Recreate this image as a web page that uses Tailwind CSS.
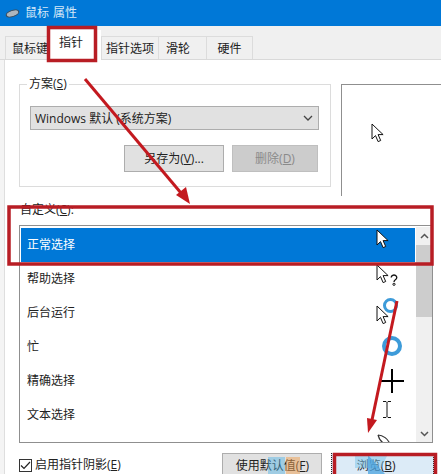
<!DOCTYPE html>
<html lang="zh-CN">
<head>
  <meta charset="UTF-8" />
  <title>鼠标 属性</title>
  <script src="https://cdn.jsdelivr.net/npm/@tailwindcss/browser@4"></script>
</head>
<body class="bg-white">
  <div class="relative w-[441px] h-[474px] overflow-hidden bg-white text-[12px] leading-[16px] text-[#222] font-['Open_Sans','Noto_Sans_CJK_SC',sans-serif]">

    <!-- title bar -->
    <div class="h-[26px] bg-[#0078d7] flex items-center pl-[5px] text-[#d6e9f8]">
      <svg width="15" height="9" viewBox="0 0 15 9"><ellipse cx="7.5" cy="4.5" rx="6.5" ry="3" transform="rotate(-18 7.5 4.5)" fill="#aeb6bd" stroke="#3f4a55"/></svg>
      <span class="ml-[5px]">鼠标</span>
      <span class="ml-[4px]">属性</span>
    </div>

    <!-- tabs -->
    <div class="h-[34px] bg-[#f0f0f0] border-b border-[#d9d9d9] pl-[5px] flex items-end">
      <div class="w-[45px] h-[23px] border border-b-0 border-[#dcdcdc] pl-[6px] pt-[4px] whitespace-nowrap overflow-hidden">鼠标键</div>
      <div class="w-[51px] h-[30px] bg-white -mb-px pl-[9px] pt-[5px]">指针</div>
      <div class="w-[58px] h-[23px] border border-b-0 border-[#dcdcdc] text-center pt-[4px]">指针选项</div>
      <div class="w-[48px] h-[23px] border border-b-0 border-l-0 border-[#dcdcdc] pl-[7px] pt-[4px]">滑轮</div>
      <div class="w-[46px] h-[23px] border border-b-0 border-l-0 border-[#dcdcdc] text-center pt-[4px]">硬件</div>
    </div>

    <!-- tab page -->
    <div class="h-[414px] bg-[#f4f4f4] pl-[4px]">
      <div class="h-full bg-white border-l border-[#dedede] pl-[14px] pt-[24px]">
        <div class="flex items-start">
          <div class="relative w-[312px] h-[103px] border border-[#dcdcdc] pl-[10px] pt-[21px]">
            <span class="absolute left-[7px] -top-[9px] bg-white px-[2px]">方案(<u>S</u>)</span>
            <div class="w-[289px] h-[24px] bg-[#e1e1e1] border border-[#adadad] flex items-center justify-between pl-[4px] pr-[5px]">
              <span class="pt-[2px]">Windows 默认 (系统方案)</span>
              <svg width="10" height="6" viewBox="0 0 10 6"><path d="M1 1l4 4 4-4" fill="none" stroke="#444" stroke-width="1.3"/></svg>
            </div>
            <div class="flex mt-[15px] ml-[94px] gap-[8px]">
              <div class="w-[100px] h-[27px] bg-[#e1e1e1] border border-[#adadad] flex items-center justify-center">另存为(<u>V</u>)...</div>
              <div class="w-[86px] h-[27px] bg-[#cccccc] border border-[#bfbfbf] flex items-center justify-center text-[#8a8a8a]">删除(<u>D</u>)</div>
            </div>
          </div>
          <div class="w-[100px] h-[112px] ml-[10px] border-l border-t border-[#8f8f8f] flex pl-[29px] pt-[38px]">
            <svg width="13" height="20" viewBox="0 0 13 20"><path d="M1 1v15l3.5-3.4 2.6 6 2.6-1.1-2.6-5.9h5z" fill="#fff" stroke="#111" stroke-width="1"/></svg>
          </div>
        </div>

        <div class="mt-[6px] ml-[1px] h-[16px]">自定义(<u>C</u>):</div>

        <!-- cursor list -->
        <div class="w-[414px] h-[218px] mt-[7px] border border-[#8f8f8f] flex pl-px pt-px">
          <div class="w-[395px] h-full overflow-hidden pt-px">
            <div class="h-[34px] bg-[#0078d7] text-white flex items-center justify-between pl-[6px] pr-[26px]">
              <span>正常选择</span>
              <svg class="self-start mt-px" width="13" height="20" viewBox="0 0 13 20"><path d="M1 1v15l3.5-3.4 2.6 6 2.6-1.1-2.6-5.9h5z" fill="#fff" stroke="#111" stroke-width="1"/></svg>
            </div>
            <div class="h-[34px] flex items-center justify-between pl-[6px] pr-[17px]">
              <span>帮助选择</span>
              <span class="self-start mt-[2px] flex items-end">
                <svg width="13" height="20" viewBox="0 0 13 20"><path d="M1 1v15l3.5-3.4 2.6 6 2.6-1.1-2.6-5.9h5z" fill="#fff" stroke="#111" stroke-width="1"/></svg>
                <svg class="ml-px -mb-[2px]" width="8" height="12" viewBox="0 0 8 12"><path d="M1.2 3.5a2.8 2.5 0 1 1 4.2 2.2c-1 .7-1.4 1.1-1.4 2.3" fill="none" stroke="#111" stroke-width="1.3"/><circle cx="4" cy="10.3" r="1.1" fill="none" stroke="#111"/></svg>
              </span>
            </div>
            <div class="h-[34px] flex items-center justify-between pl-[6px] pr-[17px]">
              <span>后台运行</span>
              <span class="relative self-start mt-[2px] block w-[22px] h-[28px]">
                <svg class="absolute left-0 top-[7px]" width="13" height="20" viewBox="0 0 13 20"><path d="M1 1v15l3.5-3.4 2.6 6 2.6-1.1-2.6-5.9h5z" fill="#fff" stroke="#111" stroke-width="1"/></svg>
                <span class="absolute left-[7px] top-0 w-[15px] h-[15px] rounded-full border-[3px] border-[#3d9bd9]"></span>
              </span>
            </div>
            <div class="h-[34px] flex items-center justify-between pl-[6px] pr-[13px]">
              <span>忙</span>
              <span class="self-start mt-[6px] w-[20px] h-[20px] rounded-full border-[4px] border-[#3d9bd9]"></span>
            </div>
            <div class="h-[34px] flex items-center justify-between pl-[6px] pr-[11px]">
              <span>精确选择</span>
              <svg width="24" height="24" viewBox="0 0 24 24"><path d="M12 0v24M0 12h24" stroke="#000" stroke-width="2"/></svg>
            </div>
            <div class="h-[34px] flex items-center justify-between pl-[6px] pr-[24px]">
              <span>文本选择</span>
              <svg class="self-start mt-[3px]" width="8" height="17" viewBox="0 0 8 17"><path d="M0 .5h3l1 1 1-1h3M4 1.5v14M0 16.5h3l1-1 1 1h3" fill="none" stroke="#111"/></svg>
            </div>
            <div class="h-[12px] flex justify-end pr-[24px] pt-[2px]">
              <svg width="14" height="10" viewBox="0 0 14 10"><path d="M1 1c5 0 10 4 12 9M1 1c1 4 4 8 8 9" fill="none" stroke="#333" stroke-width="1.2"/></svg>
            </div>
          </div>
          <div class="w-[16px] ml-px h-full bg-[#f0f0f0] flex flex-col">
            <div class="h-[18px] flex items-center justify-center">
              <svg width="9" height="6" viewBox="0 0 9 6"><path d="M1 5l3.5-3.5L8 5" fill="none" stroke="#555" stroke-width="1.5"/></svg>
            </div>
            <div class="h-[72px] bg-[#cdcdcd]"></div>
            <div class="flex-1"></div>
            <div class="h-[17px] flex items-center justify-center">
              <svg width="9" height="6" viewBox="0 0 9 6"><path d="M1 1l3.5 3.5L8 1" fill="none" stroke="#555" stroke-width="1.5"/></svg>
            </div>
          </div>
        </div>

        <!-- bottom row -->
        <div class="flex items-start mt-[10px]">
          <div class="flex items-center mt-[4px]">
            <span class="w-[13px] h-[13px] border border-[#333] flex items-center justify-center">
              <svg width="11" height="9" viewBox="0 0 11 9"><path d="M1 4.5l3 3 6-6.5" fill="none" stroke="#222" stroke-width="1.2"/></svg>
            </span>
            <span class="ml-[3px]">启用指针阴影(<u>E</u>)</span>
          </div>
          <div class="ml-[101px] w-[100px] h-[27px] bg-[#e1e1e1] border border-[#adadad] pl-[13px] pt-[4px] whitespace-nowrap">使用默认值(<u>F</u>)</div>
          <div class="ml-[9px] w-[103px] h-[27px] bg-[#dcebf7] border border-dotted border-[#222] pl-[25px] pt-[4px]">浏览(<u>B</u>)</div>
        </div>
      </div>
    </div>

    <!-- red annotations and the stray cursor smudges drawn over the dialog -->
    <svg class="absolute left-0 top-0" width="441" height="474" viewBox="0 0 441 474" fill="none">
      <rect x="268" y="457" width="17" height="17" fill="#4fb4e6" fill-opacity="0.45"/>
      <rect x="286" y="457" width="14" height="17" fill="#f0a050" fill-opacity="0.5"/>
      <path d="M355 456h32l-6 12h-26z" fill="#7cc4ea" fill-opacity="0.5"/>
      <path d="M368 455v19h17z" fill="#4aa3df" fill-opacity="0.75"/>
      <rect x="48.5" y="27.5" width="47" height="33" stroke="#b81d24" stroke-width="3.5"/>
      <rect x="9" y="207" width="423" height="57" stroke="#b81d24" stroke-width="3.5"/>
      <rect x="334.5" y="454.5" width="101" height="30" stroke="#b81d24" stroke-width="3.5"/>
      <path d="M85 79L181 193" stroke="#c3191f" stroke-width="3"/>
      <path d="M190 204L176 195L186 187Z" fill="#c3191f"/>
      <path d="M397 301L372 420" stroke="#c3191f" stroke-width="3"/>
      <path d="M368 433L367 418L377 420Z" fill="#c3191f"/>
    </svg>
  </div>
</body>
</html>
